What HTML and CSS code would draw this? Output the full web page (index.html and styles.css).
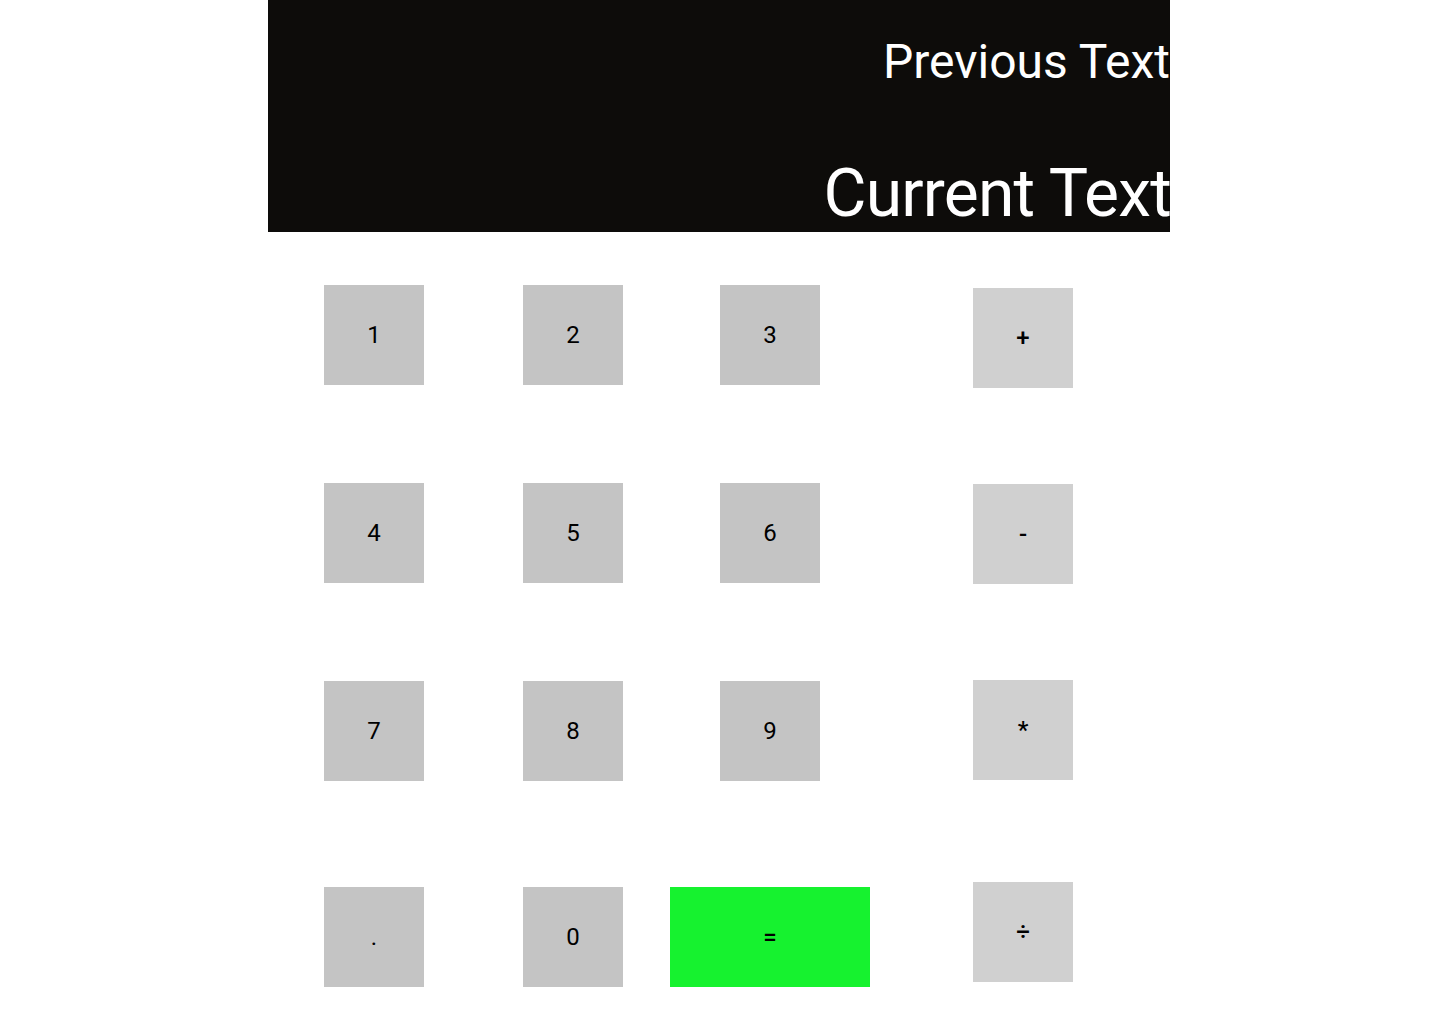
FILE: index.html
```html
<!DOCTYPE html>
<html>
<head>
<meta charset="utf-8">
<link rel="stylesheet" href="styles.css">
</head>
<body>
<div class="calculator">
  <div class="display">
    <div class="previous">Previous Text</div>
    <div class="current">Current Text</div>
  </div>
  <div class="keypad">
    <div class="digits">
      <button class="key">1</button>
      <button class="key">2</button>
      <button class="key">3</button>
      <button class="key">4</button>
      <button class="key">5</button>
      <button class="key">6</button>
      <button class="key">7</button>
      <button class="key">8</button>
      <button class="key">9</button>
      <button class="key">.</button>
      <button class="key">0</button>
      <button class="key equals">=</button>
    </div>
    <div class="operators">
      <button class="key op">+</button>
      <button class="key op">-</button>
      <button class="key op">*</button>
      <button class="key op">÷</button>
    </div>
  </div>
</div>
</body>
</html>
```
FILE: styles.css
```css
html, body {
  margin: 0;
  padding: 0;
  background: #ffffff;
}
body {
  font-family: Roboto, "Liberation Sans", sans-serif;
}
.calculator {
  width: 902px;
  margin-left: calc(50% - 452px);
}
.display {
  background: #0d0c0a;
  height: 232px;
  color: #ffffff;
  display: flex;
  flex-direction: column;
  align-items: flex-end;
  box-sizing: border-box;
}
.previous {
  font-size: 48px;
  line-height: 56px;
  margin-top: 34px;
}
.current {
  font-size: 66px;
  line-height: 72px;
  margin-top: 68px;
  letter-spacing: -0.8px;
  margin-right: -1px;
}
.keypad {
  display: flex;
  padding-top: 53px;
  padding-left: 56px;
}
.digits {
  display: grid;
  grid-template-columns: 199px 147px 200px;
  grid-template-rows: 198px 198px 206px 100px;
  justify-items: start;
  align-items: start;
}
.digits .key:nth-child(3n) {
  justify-self: center;
}
.operators {
  display: grid;
  grid-template-rows: 196px 196px 202px 100px;
  align-items: start;
  margin-left: 103px;
  margin-top: 3px;
}
.key {
  width: 100px;
  height: 100px;
  border: none;
  padding: 0;
  margin: 0;
  background: #c4c4c4;
  color: #000000;
  font-family: Roboto, "Liberation Sans", sans-serif;
  font-size: 24px;
  font-weight: 400;
  display: flex;
  align-items: center;
  justify-content: center;
}
.digits .key.equals {
  width: 200px;
  justify-self: stretch;
  background: #16f22f;
  font-weight: 500;
}
.op {
  background: #d0d0d0;
  font-weight: 500;
}
```
